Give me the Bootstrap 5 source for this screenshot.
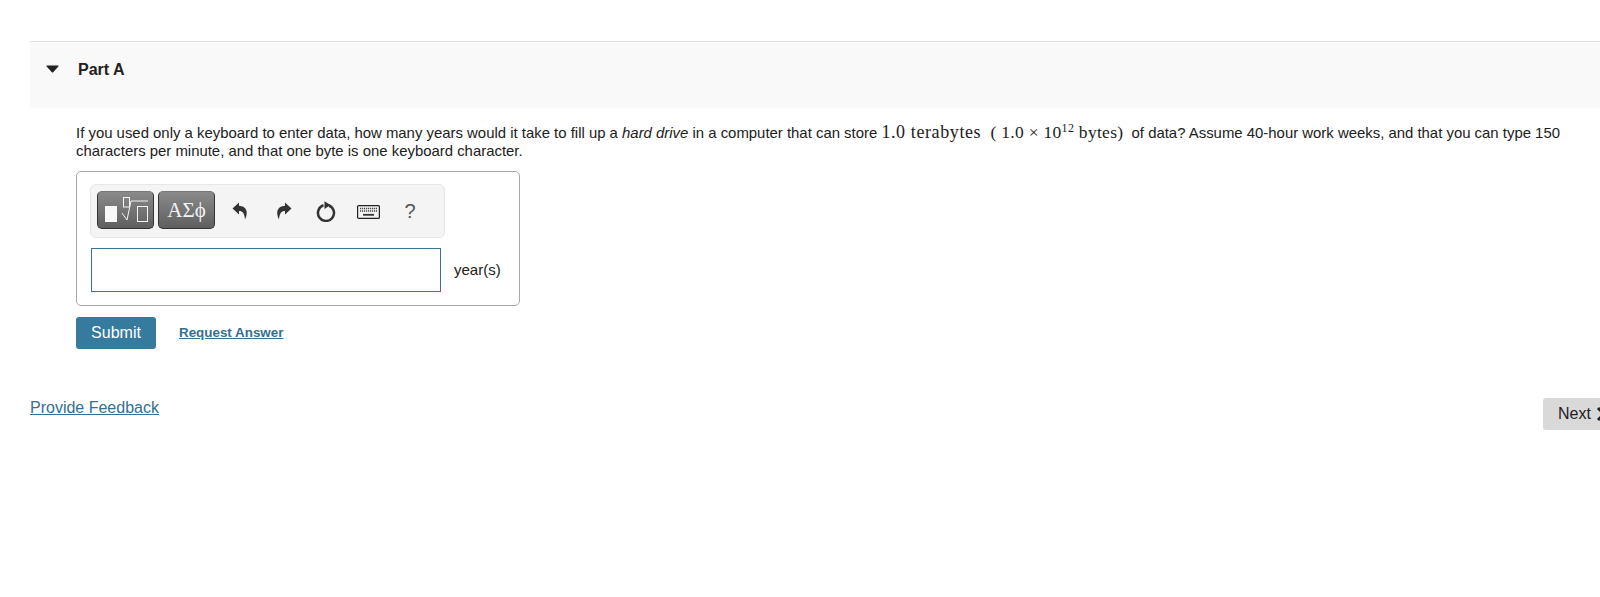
<!DOCTYPE html>
<html lang="en">
<head>
<meta charset="utf-8">
<title>Part A</title>
<link href="https://cdn.jsdelivr.net/npm/bootstrap@5.3.0/dist/css/bootstrap.min.css" rel="stylesheet">
<style>
html,body{height:597px;overflow:hidden;background:#fff}
body{font-family:"Liberation Sans",Arial,sans-serif;color:#212121;font-size:15px}
.page-wrap{padding:41px 0 0 30px}
.part-panel{border-top:1px solid #e0e0e0}
.part-head{background:#f9f9f9;height:66px;padding:18px 0 0 16px;gap:19px}
.part-title{font-size:16px;font-weight:700;line-height:20px;margin:0}
.caret{margin-top:5px}
.part-body{padding:16px 0 0 46px}
.qtext{font-size:14.92px;line-height:18px;margin:0;width:1500px}
.math{font-family:"Liberation Serif",serif;font-size:18px;letter-spacing:.6px;line-height:0;margin-right:4px}
.math-b{font-size:17.5px;letter-spacing:.3px;margin-left:-1px}
.math sup{font-size:12px}
.answer-box{width:444px;height:135px;border:1px solid #a8a8a8;border-radius:5px;margin-top:11px;padding:12px 13px}
.toolbar{width:355px;height:54px;background:#f4f4f4;border:1px solid #e6e6e6;border-radius:6px;padding:0 6px;gap:4px}
.tpl{flex:none;width:57px;height:38px;margin-bottom:2px;border-radius:5px;border:1px solid #333;border-top-color:#777;background:linear-gradient(#8a8a8a,#5f5f5f);color:#f2f2f2;padding:0;line-height:1}
.tpl svg{display:block}
.tpl-b{font-family:"Liberation Serif",serif;font-size:21px;margin-right:1.5px}
.tool-ic{flex:none;width:39px;line-height:1}
.tool-key{width:38px}
.help{width:37px;font-size:20px;color:#555}
.ans-row{margin-top:10px;gap:13px}
.ans-input{width:350px;height:44px;margin-left:1px;border:1px solid #3a7599;background:#fff;border-radius:0;padding:0 6px}
.unit{font-size:15px}
.act-row{margin-top:11px;gap:23px}
.btn-submit{background:#367a9e;border:0;color:#fff;font-size:16px;width:80px;height:32px;padding:0;border-radius:3px}
.req-link{color:#34708f;font-weight:700;font-size:13.4px}
.foot-row{margin-top:49px}
.fb-link{color:#34708f;font-size:16px;line-height:20px}
.btn-next{background:#d9d9d9;border:0;border-radius:3px;color:#212121;font-size:16px;width:84px;height:32px;margin:0 -27px 0 0;padding:0 0 0 15px;gap:5px;white-space:nowrap}
</style>
</head>
<body>
<div class="page-wrap">
  <section class="part-panel">
    <div class="part-head d-flex">
      <svg class="caret" width="13" height="8" viewBox="0 0 13 8"><path d="M1 0.500H12Q13 0.500 12.300 1.500L7 7.500H6L0.700 1.500Q0 0.500 1 0.500Z" fill="#212121"/></svg>
      <h2 class="part-title">Part A</h2>
    </div>
    <div class="part-body">
      <p class="qtext">If you used only a keyboard to enter data, how many years would it take to fill up a <em>hard drive</em> in a computer that can store <span class="math">1.0 terabytes &nbsp;<span class="math-b">( 1.0 × 10<sup>12</sup> bytes)</span></span> of data? Assume 40-hour work weeks, and that you can type 150 characters per minute, and that one byte is one keyboard character.</p>
      <div class="answer-box">
        <div class="toolbar d-flex align-items-center">
          <button class="tpl" type="button" aria-label="Templates">
            <svg width="55" height="36" viewBox="0 0 55 36" fill="none" stroke="#f4f4f4"><rect x="7" y="14" width="12" height="16" fill="#f8f8f8" stroke="none"/><rect x="25.500" y="5.500" width="6" height="9.500"/><path d="M24 21l5 7 4-19h17"/><rect x="39.500" y="14.500" width="10" height="15"/></svg>
          </button>
          <button class="tpl tpl-b" type="button">ΑΣϕ</button>
          <span class="tool-ic text-center"><svg width="17" height="18" viewBox="0 0 17 18"><path d="M7 .5L.5 6.500 7 12.500V9C10 8.800 12.500 10.500 13 17.500 16.500 11 15 4 7 3.800Z" fill="#333"/></svg></span>
          <span class="tool-ic text-center"><svg width="17" height="18" viewBox="0 0 17 18"><path d="M10 .5L16.500 6.500 10 12.500V9C7 8.800 4.500 10.500 4 17.500 .5 11 2 4 10 3.800Z" fill="#333"/></svg></span>
          <span class="tool-ic text-center"><svg width="20" height="21" viewBox="0 0 20 21" fill="none"><path d="M7.500 4.300A8 8 0 1 0 13 4.500" stroke="#333" stroke-width="2.500"/><path d="M8.500 0.200V8L14.500 4.100Z" fill="#333"/></svg></span>
          <span class="tool-ic tool-key text-center"><svg width="23" height="14" viewBox="0 0 23 14" fill="none"><rect x="0.600" y="0.600" width="21.800" height="12.800" rx="1" stroke="#222" stroke-width="1.200" fill="#f2f2f2"/><path d="M3 3.500H20M3 6H20" stroke="#444" stroke-width="1.500" stroke-dasharray="1.200 .8"/><path d="M6 9.800H17" stroke="#333" stroke-width="1.800"/></svg></span>
          <span class="tool-ic text-center help">?</span>
        </div>
        <div class="ans-row d-flex align-items-center">
          <input class="ans-input" type="text" aria-label="Answer">
          <span class="unit">year(s)</span>
        </div>
      </div>
      <div class="act-row d-flex align-items-center">
        <button class="btn-submit" type="button">Submit</button>
        <a class="req-link" href="#">Request Answer</a>
      </div>
    </div>
  </section>
  <div class="foot-row d-flex justify-content-between align-items-start">
    <a class="fb-link" href="#">Provide Feedback</a>
    <button class="btn-next d-flex align-items-center" type="button">Next <svg width="12" height="14" viewBox="0 0 12 14" aria-hidden="true"><path d="M2 1L8 7 2 13" fill="none" stroke="#212121" stroke-width="3"/></svg></button>
  </div>
</div>
<script src="https://cdn.jsdelivr.net/npm/bootstrap@5.3.0/dist/js/bootstrap.bundle.min.js"></script>
</body>
</html>
